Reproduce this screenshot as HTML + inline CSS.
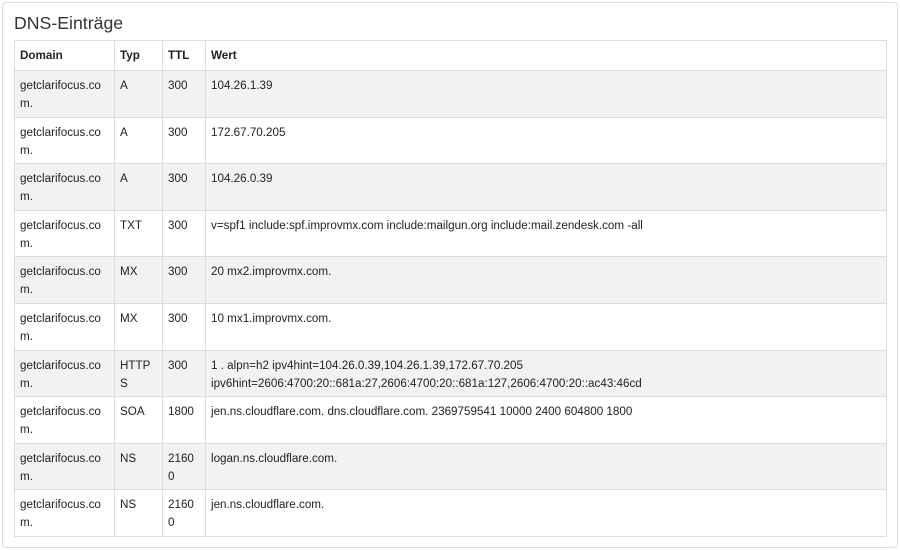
<!DOCTYPE html>
<html><head><style>
body{margin:0;background:#fff;font-family:"Liberation Sans",Arial,sans-serif;color:#222;}
.box{position:absolute;left:2px;top:2px;width:894px;height:544px;border:1px solid #ddd;border-radius:4px;}
h3{position:absolute;left:14px;top:13px;margin:0;font-size:17.7px;font-weight:normal;color:#333;}
table{position:absolute;left:14px;top:40px;width:873px;border-collapse:collapse;font-size:11.65px;table-layout:fixed;}
td,th{border:1px solid #ddd;vertical-align:top;text-align:left;padding:6px 5px 0 5px;line-height:18px;word-break:break-all;}
th{height:23px;font-weight:bold;padding-top:6px;}
td{height:39.6px;}
tbody tr:nth-child(odd){background:#f2f2f2;}
</style></head><body>
<div class="box"></div>
<h3>DNS-Einträge</h3>
<table>
<colgroup><col style="width:100px"><col style="width:48px"><col style="width:43px"><col></colgroup>
<thead><tr><th>Domain</th><th>Typ</th><th>TTL</th><th>Wert</th></tr></thead>
<tbody>
<tr><td>getclarifocus.com.</td><td>A</td><td>300</td><td>104.26.1.39</td></tr>
<tr><td>getclarifocus.com.</td><td>A</td><td>300</td><td>172.67.70.205</td></tr>
<tr><td>getclarifocus.com.</td><td>A</td><td>300</td><td>104.26.0.39</td></tr>
<tr><td>getclarifocus.com.</td><td>TXT</td><td>300</td><td>v=spf1 include:spf.improvmx.com include:mailgun.org include:mail.zendesk.com -all</td></tr>
<tr><td>getclarifocus.com.</td><td>MX</td><td>300</td><td>20 mx2.improvmx.com.</td></tr>
<tr><td>getclarifocus.com.</td><td>MX</td><td>300</td><td>10 mx1.improvmx.com.</td></tr>
<tr><td>getclarifocus.com.</td><td>HTTPS</td><td>300</td><td style="word-break:normal">1 . alpn=h2 ipv4hint=104.26.0.39,104.26.1.39,172.67.70.205<br>ipv6hint=2606:4700:20::681a:27,2606:4700:20::681a:127,2606:4700:20::ac43:46cd</td></tr>
<tr><td>getclarifocus.com.</td><td>SOA</td><td>1800</td><td>jen.ns.cloudflare.com. dns.cloudflare.com. 2369759541 10000 2400 604800 1800</td></tr>
<tr><td>getclarifocus.com.</td><td>NS</td><td>21600</td><td>logan.ns.cloudflare.com.</td></tr>
<tr><td>getclarifocus.com.</td><td>NS</td><td>21600</td><td>jen.ns.cloudflare.com.</td></tr>
</tbody></table>
</body></html>
